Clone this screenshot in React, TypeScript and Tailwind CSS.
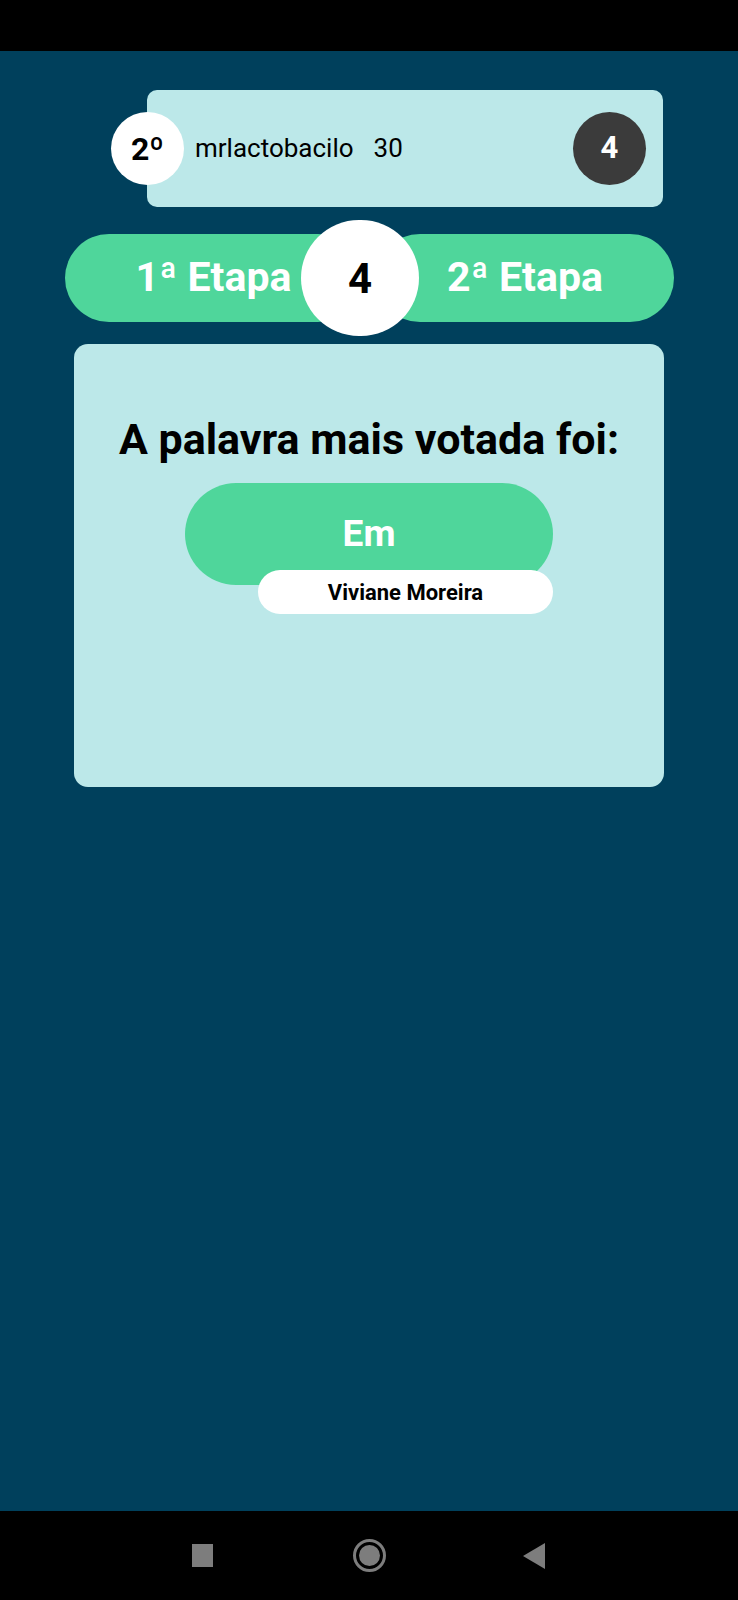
import React from "react";

export default function App() {
  return (
    <div
      className="w-[738px] h-[1600px] flex flex-col bg-[#00405c]"
      style={{ fontFamily: "Roboto, 'Noto Sans', sans-serif" }}
    >
      <div className="h-[51px] bg-black shrink-0" />
      <div className="flex-1 flex flex-col">
        {/* top player card */}
        <div className="mt-[39px] ml-[111px] flex items-center">
          <div className="relative z-10 w-[73px] h-[73px] rounded-full bg-white flex items-center justify-center text-[32px] font-bold text-black mr-[-37px]">
            2º
          </div>
          <div className="w-[516px] h-[117px] rounded-[10px] bg-[#bce8e9] flex items-center pl-[48px] pr-[17px]">
            <span className="text-[26px] text-black">mrlactobacilo</span>
            <span className="text-[26px] text-black ml-[20px]">30</span>
            <div className="ml-auto w-[73px] h-[73px] rounded-full bg-[#3b3b3b] flex items-center justify-center text-[31px] font-bold text-white">
              4
            </div>
          </div>
        </div>

        {/* stage row */}
        <div className="mt-[13px] ml-[65px] flex items-center">
          <div className="w-[297px] h-[88px] rounded-full bg-[#4fd69b] flex items-center justify-center text-[41px] font-bold text-white">
            1ª Etapa
          </div>
          <div className="relative z-10 w-[118px] h-[116px] rounded-full bg-white ml-[-61px] flex items-center justify-center text-[42px] font-bold text-black">
            4
          </div>
          <div className="w-[298px] h-[88px] rounded-full bg-[#4fd69b] ml-[-43px] flex items-center justify-center text-[41px] font-bold text-white">
            2ª Etapa
          </div>
        </div>

        {/* main card */}
        <div className="mt-[8px] ml-[74px] w-[590px] h-[443px] rounded-[14px] bg-[#bce8e9] flex flex-col items-center pt-[69px]">
          <div className="text-[43px] leading-[52px] font-bold text-black whitespace-nowrap">
            A palavra mais votada foi:
          </div>
          <div className="mt-[18px] w-[368px] flex flex-col items-end">
            <div className="w-[368px] h-[102px] rounded-full bg-[#4fd69b] flex items-center justify-center text-[37px] font-bold text-white">
              Em
            </div>
            <div className="relative z-10 mt-[-15px] w-[295px] h-[44px] rounded-full bg-white flex items-center justify-center text-[22px] font-bold text-black">
              Viviane Moreira
            </div>
          </div>
        </div>
      </div>

      {/* nav bar */}
      <div className="h-[89px] bg-black shrink-0 flex items-center">
        <div className="ml-[192px] w-[21px] h-[23px] bg-[#7d7d7d]" />
        <div className="ml-[140px] w-[33px] h-[33px] rounded-full border-[3px] border-[#7d7d7d] flex items-center justify-center">
          <div className="w-[21px] h-[21px] rounded-full bg-[#7d7d7d]" />
        </div>
        <svg className="ml-[137px]" width="22" height="26" viewBox="0 0 22 26">
          <polygon points="22,0 22,26 0,13" fill="#7d7d7d" />
        </svg>
      </div>
    </div>
  );
}
